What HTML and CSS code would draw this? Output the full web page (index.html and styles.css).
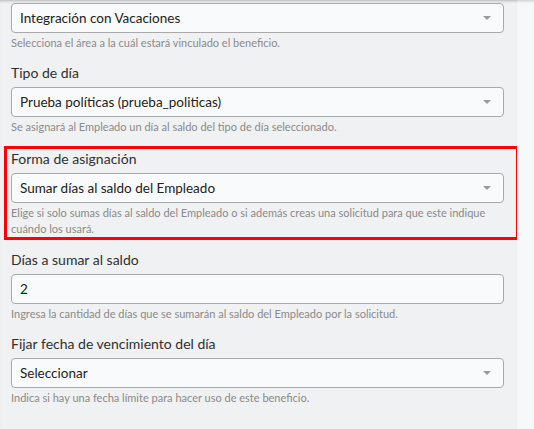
FILE: index.html
```html
<!DOCTYPE html>
<html lang="es">
  <head>
    <meta charset="UTF-8" />
    <meta name="viewport" content="width=device-width, initial-scale=1.0" />
    <title>Beneficio</title>
    <link rel="stylesheet" href="styles.css">
  </head>
  <body>
    <div class="layout">
      <div class="form-panel">
        <div class="form-group">
          <div class="select-box">
            <span>Integración con Vacaciones</span>
            <span class="caret"></span>
          </div>
          <p class="help">Selecciona el área a la cuál estará vinculado el beneficio.</p>
        </div>

        <div class="form-group">
          <label>Tipo de día</label>
          <div class="select-box">
            <span>Prueba políticas (prueba_politicas)</span>
            <span class="caret"></span>
          </div>
          <p class="help">Se asignará al Empleado un día al saldo del tipo de día seleccionado.</p>
        </div>

        <div class="form-group highlight">
          <label>Forma de asignación</label>
          <div class="select-box">
            <span>Sumar días al saldo del Empleado</span>
            <span class="caret"></span>
          </div>
          <p class="help">Elige si solo sumas días al saldo del Empleado o si además creas una solicitud para que este indique cuándo los usará.</p>
        </div>

        <div class="form-group">
          <label for="dias">Días a sumar al saldo</label>
          <input class="text-input" type="text" id="dias" value="2" />
          <p class="help">Ingresa la cantidad de días que se sumarán al saldo del Empleado por la solicitud.</p>
        </div>

        <div class="form-group">
          <label>Fijar fecha de vencimiento del día</label>
          <div class="select-box">
            <span>Seleccionar</span>
            <span class="caret"></span>
          </div>
          <p class="help">Indica si hay una fecha límite para hacer uso de este beneficio.</p>
        </div>
      </div>
      <div class="side-strip"></div>
    </div>
  </body>
</html>
```

FILE: styles.css
```css
body {
  margin: 0;
  font-family: "Lato", "Noto Sans", sans-serif;
  background-color: #f0f1f2;
  color: #333;
}

.layout {
  display: flex;
  height: 429px;
  overflow: hidden;
}

.form-panel {
  width: 517px;
  box-sizing: border-box;
  padding: 3px 13px 0 11px;
  background-color: #f0f1f2;
  box-shadow: inset 0 3px 3px -2px rgba(0, 0, 0, 0.25);
}

.side-strip {
  flex: 1;
  background-color: #f7f8f9;
  box-shadow: inset 0 3px 3px -2px rgba(0, 0, 0, 0.2);
}

.form-group {
  margin-bottom: 12px;
}

.form-group label {
  display: block;
  font-size: 14px;
  line-height: 20px;
  color: #2f2f33;
  margin-bottom: 4px;
}

.select-box,
.text-input {
  display: flex;
  align-items: center;
  justify-content: space-between;
  width: 100%;
  height: 30px;
  box-sizing: border-box;
  padding: 0 12px 0 8px;
  background-color: #f9fafb;
  border: 1px solid #a9a9a9;
  border-radius: 4px;
  font-family: inherit;
  font-size: 13.5px;
  color: #222;
}

.caret {
  width: 0;
  height: 0;
  border-left: 4px solid transparent;
  border-right: 4px solid transparent;
  border-top: 4px solid #9a9a9a;
}

.help {
  margin: 2px 0 0;
  font-size: 11px;
  line-height: 16px;
  color: #8a8a8a;
}

.highlight {
  margin: -1px -15px -3px -7px;
  padding: 0 12px 0 4px;
  border: 3px solid #f00;
}

.highlight + .form-group {
  margin-top: 13px;
}
```
